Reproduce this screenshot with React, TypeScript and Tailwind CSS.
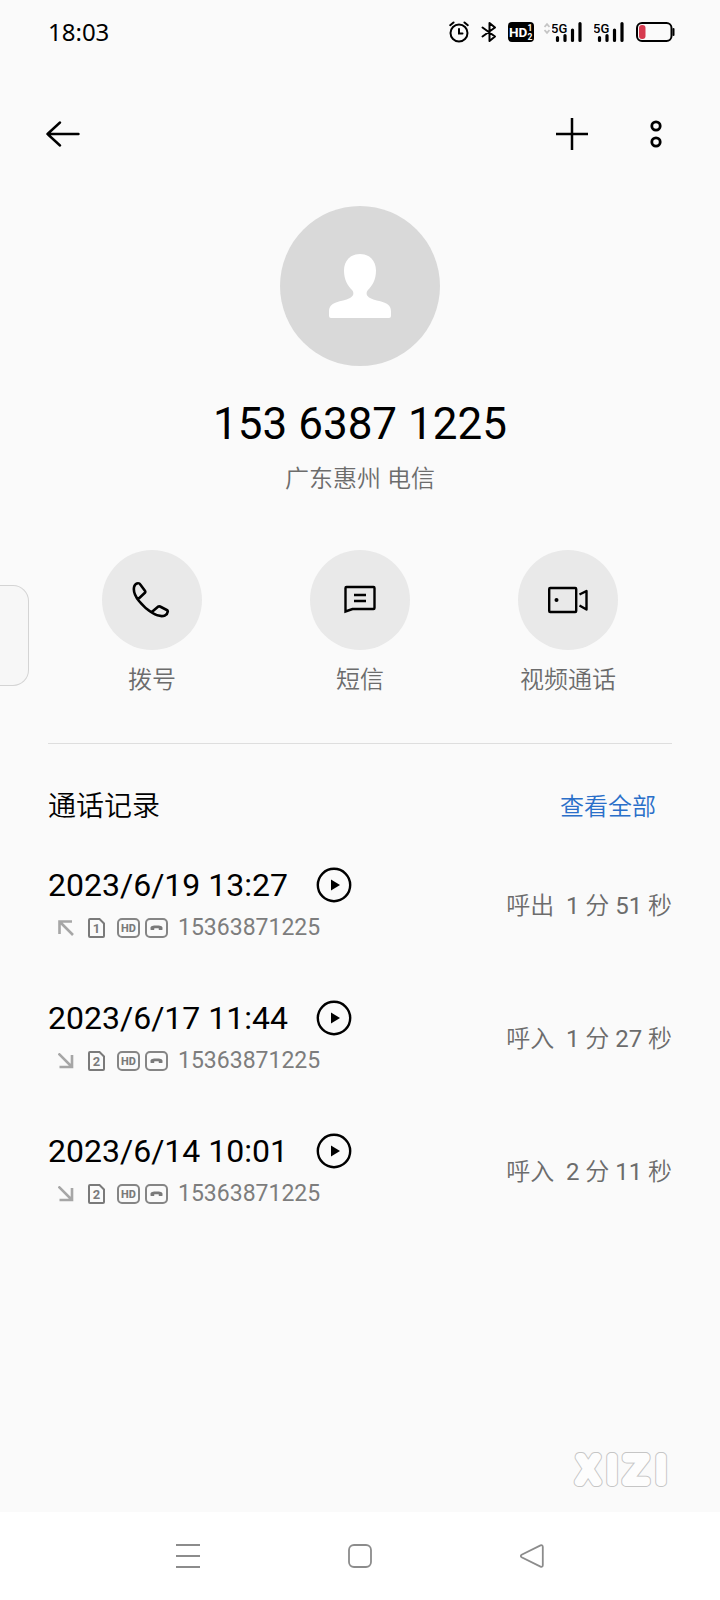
import type { ReactNode } from 'react'

type CallRecord = {
  time: string
  direction: 'out' | 'in'
  sim: number
  number: string
  minutes: number
  seconds: number
}

const records: CallRecord[] = [
  { time: '2023/6/19 13:27', direction: 'out', sim: 1, number: '15363871225', minutes: 1, seconds: 51 },
  { time: '2023/6/17 11:44', direction: 'in', sim: 2, number: '15363871225', minutes: 1, seconds: 27 },
  { time: '2023/6/14 10:01', direction: 'in', sim: 2, number: '15363871225', minutes: 2, seconds: 11 }
]

function SignalIcon() {
  return (
    <svg width="32" height="22" viewBox="0 0 32 22">
      <text x="-1" y="11.500" fontSize="13" fontWeight="500" className="font-['Roboto',sans-serif]">5G</text>
      <path d="M5.500 16.500v3M13 14.500v5M20.500 9v10.500M28 2.500v17" stroke="black" strokeWidth="3.200" strokeLinecap="round" />
    </svg>
  )
}

function StatusBar() {
  return (
    <div className="flex h-16 items-center justify-between pr-[45px] pl-12">
      <span className="font-['Noto_Sans',sans-serif] text-2xl text-black">18:03</span>
      <div className="flex items-center">
        <svg width="20" height="22" viewBox="0 0 20 22" fill="none" stroke="black" strokeWidth="2" strokeLinecap="round">
          <circle cx="10" cy="12" r="8.500" />
          <path d="M10 8v4.500h3.500M1.200 4.200L4.500 1.500M18.800 4.200L15.500 1.500" />
        </svg>
        <svg className="ml-3" width="16" height="22" viewBox="0 0 16 22" fill="none" stroke="black" strokeWidth="2" strokeLinejoin="round" strokeLinecap="round">
          <path d="M1.500 6.500l12.500 9L8.500 20V2L14 6.500l-12.500 9" />
        </svg>
        <svg className="ml-[11px]" width="26" height="20" viewBox="0 0 26 20">
          <rect width="26" height="20" rx="4" fill="black" />
          <g fill="white" fontWeight="700" className="font-['Roboto',sans-serif]">
            <text x="1" y="15" fontSize="13.500">HD</text>
            <text x="19.500" y="9" fontSize="8.500">1</text>
            <text x="19.500" y="17.500" fontSize="8.500">2</text>
          </g>
        </svg>
        <svg className="mr-0.5 ml-2.5" width="6" height="22" viewBox="0 0 6 22" fill="none" stroke="#c4c4c4" strokeWidth="1.800">
          <path d="M.5 6L3 3.200 5.500 6M.5 9L3 11.800 5.500 9" />
        </svg>
        <SignalIcon />
        <div className="w-2.5" />
        <SignalIcon />
        <svg className="ml-2.5" width="39" height="20" viewBox="0 0 39 20">
          <rect x="1" y="1" width="34.500" height="18" rx="5" fill="none" stroke="black" strokeWidth="2" />
          <rect x="3" y="3" width="6.500" height="14" rx="3" fill="#d63a4f" />
          <path d="M37.500 7v6" stroke="black" strokeWidth="2" strokeLinecap="round" />
        </svg>
      </div>
    </div>
  )
}

function Header() {
  return (
    <header className="flex h-35 items-center justify-between pr-12 pl-[42px]">
      <button type="button" aria-label="返回" className="p-1">
        <svg width="34" height="26" viewBox="0 0 34 26" fill="none" stroke="black" strokeWidth="2.400" strokeLinecap="round" strokeLinejoin="round">
          <path d="M14 1.500L1.500 13 14 24.500M1.500 13h31" />
        </svg>
      </button>
      <div className="flex items-center gap-13">
        <button type="button" aria-label="添加">
          <svg width="32" height="32" viewBox="0 0 32 32" stroke="black" strokeWidth="2.500">
            <path d="M16 0v32M0 16h32" />
          </svg>
        </button>
        <button type="button" aria-label="更多" className="px-2.5">
          <svg width="12" height="28" viewBox="0 0 12 28" fill="none" stroke="black" strokeWidth="2.800">
            <circle cx="6" cy="6" r="4.200" />
            <circle cx="6" cy="22" r="4.200" />
          </svg>
        </button>
      </div>
    </header>
  )
}

function Action({ label, children }: { label: string; children: ReactNode }) {
  return (
    <button type="button" className="flex flex-col items-center gap-3">
      <span className="flex size-25 items-center justify-center rounded-full bg-[#e9e9e9]">{children}</span>
      <span className="text-2xl leading-9 font-[350] text-[#6c6c6c]">{label}</span>
    </button>
  )
}

function RecordRow({ record }: { record: CallRecord }) {
  return (
    <li className="flex items-center justify-between">
      <div>
        <div className="flex h-11 items-center">
          <span className="text-[32px] leading-11 text-black">{record.time}</span>
          <button type="button" aria-label="播放录音" className="ml-7">
            <svg width="36" height="36" viewBox="0 0 36 36">
              <circle cx="18" cy="18" r="16.200" fill="none" stroke="black" strokeWidth="2.400" />
              <path d="M15 12.500v11l9-5.500z" fill="black" />
            </svg>
          </button>
        </div>
        <div className="flex h-[42px] items-center pl-2.5">
          <svg width="16" height="16" viewBox="0 0 16 16" fill="none" stroke="#a6a6a6" strokeWidth="2.600">
            {record.direction === 'out' ? <path d="M1.500 14V1.500H14M1.500 1.500L15 15" /> : <path d="M14 2v12H1.500M14 14L.5.5" />}
          </svg>
          <svg className="ml-3.5" width="18" height="20" viewBox="0 0 18 20" fill="#7a7a7a">
            <path d="M2 1h9.500L16 5.500V18a1 1 0 0 1-1 1H2a1 1 0 0 1-1-1V2a1 1 0 0 1 1-1z" fill="none" stroke="#7a7a7a" strokeWidth="2" />
            <text x="8.500" y="14.500" fontSize="13" fontWeight="700" textAnchor="middle">{record.sim}</text>
          </svg>
          <svg className="ml-[11px]" width="23" height="20" viewBox="0 0 23 20" fill="#7a7a7a">
            <rect x="1" y="1" width="21" height="18" rx="4" fill="none" stroke="#858585" strokeWidth="2" />
            <text x="11.500" y="14" fontSize="11" fontWeight="800" textAnchor="middle">HD</text>
          </svg>
          <svg className="ml-[5px]" width="23" height="20" viewBox="0 0 23 20">
            <rect x="1" y="1" width="21" height="18" rx="4" fill="none" stroke="#858585" strokeWidth="2" />
            <path d="M5.500 9.800C5.500 8 8 7.500 11.500 7.500s6 .5 6 2.300v1.400q0 .9-.9.900h-2q-.9 0-.9-.9V10.200h-4.400v1q0 .9-.9.900h-2q-.9 0-.9-.9z" fill="#7a7a7a" />
          </svg>
          <span className="ml-2.5 text-[23px] leading-10 text-[#7d7d7d]">{record.number}</span>
        </div>
      </div>
      <span className="text-2xl leading-10 font-[350] whitespace-pre text-[#6c6c6c]">
        {record.direction === 'out' ? '呼出' : '呼入'}
        {'  '}
        <span className="font-normal">{record.minutes}</span> 分 <span className="font-normal">{record.seconds}</span> 秒
      </span>
    </li>
  )
}

// outlined wordmark: grey halo first, white body on top of it
function Watermark() {
  return (
    <svg width="98" height="36" viewBox="0 0 98 36" strokeLinejoin="round">
      <defs>
        <text id="wordmark" y="30" fontSize="33" textAnchor="middle" className="font-['DejaVu_Sans',sans-serif] font-extralight">
          <tspan x="18">X</tspan>
          <tspan x="42">I</tspan>
          <tspan x="66">Z</tspan>
          <tspan x="91">I</tspan>
        </text>
      </defs>
      <use href="#wordmark" fill="#c6c6c6" stroke="#c6c6c6" strokeWidth="10" />
      <use href="#wordmark" fill="#fdfdfd" stroke="#fdfdfd" strokeWidth="8" />
    </svg>
  )
}

function NavBar() {
  return (
    <nav className="grid h-22 grid-cols-3 items-center justify-items-center bg-white px-[102px]">
      <button type="button" aria-label="最近任务">
        <svg width="24" height="24" viewBox="0 0 24 24" stroke="#8c8c8c" strokeWidth="2">
          <path d="M0 1h24M0 12h24M0 23h24" />
        </svg>
      </button>
      <button type="button" aria-label="主屏幕">
        <svg width="24" height="24" viewBox="0 0 24 24" fill="none" stroke="#8c8c8c" strokeWidth="1.800">
          <rect x="1" y="1" width="22" height="22" rx="5" />
        </svg>
      </button>
      <button type="button" aria-label="返回上一级">
        <svg width="24" height="24" viewBox="0 0 24 24" fill="none" stroke="#8c8c8c" strokeWidth="1.800">
          <path d="M1.600 10.800L20.500 1.400Q22.800.6 22.800 3v18q0 2.400-2.300 1.600L1.600 13.200q-1.600-1.200 0-2.400z" />
        </svg>
      </button>
    </nav>
  )
}

export default function App() {
  return (
    <div className="relative flex min-h-screen flex-col bg-[#fafafa] font-['Roboto','Noto_Sans_CJK_SC',sans-serif]">
      <StatusBar />
      <Header />

      <main className="flex flex-1 flex-col px-12 pt-0.5">
        <section className="flex flex-col items-center">
          <div className="flex size-40 items-center justify-center rounded-full bg-[#d9d9d9]">
            <svg width="62" height="64" viewBox="0 0 62 64" fill="white">
              <path d="M31 0C40.500 0 47 6.500 47 16.500c0 9-3.500 15-8 19.500-2.500 3-1.500 6 2 8 4.500 2.500 9 2.600 14 4.500 5 2 7 4.500 7 9V62q0 2-2 2H2q-2 0-2-2v-4.500c0-4.500 2-7 7-9 5-1.900 9.500-2 14-4.500 3.500-2 4.500-5 2-8-4.500-4.500-8-10.500-8-19.500C15 6.500 21.500 0 31 0z" />
            </svg>
          </div>
          <h1 className="mt-[30px] text-[44px] leading-14 text-black">153 6387 1225</h1>
          <p className="mt-[9px] text-2xl leading-9 font-[350] text-[#6c6c6c]">广东惠州 电信</p>
        </section>

        <section className="mt-[53px] grid grid-cols-3 border-b border-[#dedede] pb-[45px]">
          <Action label="拨号">
            <svg width="40" height="38" viewBox="1 0 40 38" fill="none" stroke="black" strokeWidth="2.600" strokeLinejoin="round">
              <path d="M7.500 2.200Q4.500 2 3.200 5.500 1.500 12 8 20q6 7.500 13.500 12 7.500 4.500 12.500 2.500 2.500-1.500 2.800-4 0-1-1-1.500L29 25.500q-1-.4-2 .2L20.500 31.200M7.500 2.200q1 0 1.600 1l5 6.800q.5 1-.2 1.800L7 18.200" />
            </svg>
          </Action>
          <Action label="短信">
            <svg width="32" height="30" viewBox="0 0 32 30" fill="none" stroke="black" strokeWidth="2.400">
              <path d="M1.500 26.500V3q0-1 1-1h27q1 0 1 1v20q0 1-1 1H8.500z" />
              <path d="M10 10h12M10 16h12" />
            </svg>
          </Action>
          <Action label="视频通话">
            <svg width="40" height="28" viewBox="0 0 40 28" fill="none" stroke="black" strokeWidth="2.400" strokeLinejoin="round">
              <rect x="1.200" y="2" width="27" height="24" rx="1" />
              <path d="M31.500 8.500l7-3.500v18.500l-7-4" />
              <circle cx="8.500" cy="14" r="2" fill="black" stroke="none" />
            </svg>
          </Action>
        </section>

        <section className="mt-[41px]">
          <div className="flex items-center justify-between pr-4">
            <h2 className="text-[28px] leading-11 font-[350] text-black">通话记录</h2>
            <a href="#all" className="text-2xl leading-11 font-[350] text-[#2a6fc9]">查看全部</a>
          </div>
          <ul className="mt-[34px] flex flex-col gap-[47px]">
            {records.map((record) => (
              <RecordRow key={record.time} record={record} />
            ))}
          </ul>
        </section>

        <div className="mt-auto flex justify-end pr-1 pb-6">
          <Watermark />
        </div>
      </main>

      <NavBar />

      <div className="absolute top-[585px] left-0 h-[101px] w-[29px] rounded-r-2xl border border-l-0 border-[#d4d4d4] bg-[#f7f7f7]" />
    </div>
  )
}
